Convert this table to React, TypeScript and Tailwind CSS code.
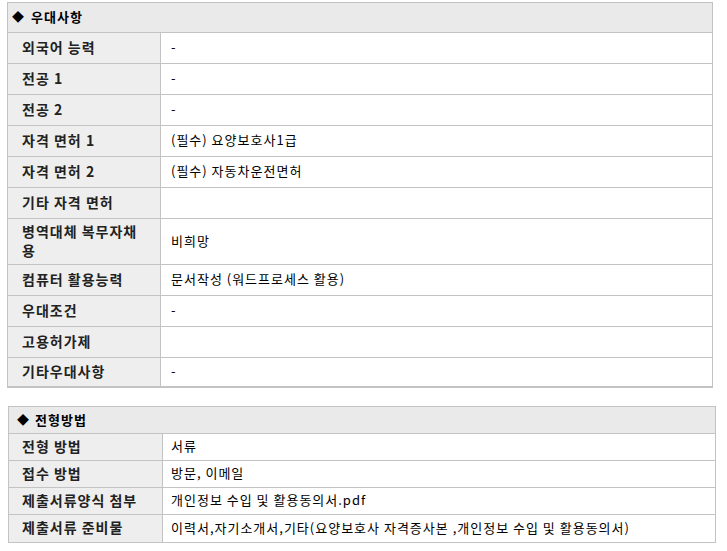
const font = { fontFamily: '"Noto Sans CJK KR", "Noto Sans", sans-serif' };

type Row = { label: React.ReactNode; value: string; h: string };

const prefRows: Row[] = [
  { label: "외국어 능력", value: "-", h: "h-[31px]" },
  { label: "전공 1", value: "-", h: "h-[31px]" },
  { label: "전공 2", value: "-", h: "h-[31px]" },
  { label: "자격 면허 1", value: "(필수) 요양보호사1급", h: "h-[31px]" },
  { label: "자격 면허 2", value: "(필수) 자동차운전면허", h: "h-[31px]" },
  { label: "기타 자격 면허", value: "", h: "h-[31px]" },
  {
    label: (
      <>
        병역대체 복무자채
        <br />용
      </>
    ),
    value: "비희망",
    h: "h-[46px]",
  },
  { label: "컴퓨터 활용능력", value: "문서작성 (워드프로세스 활용)", h: "h-[31px]" },
  { label: "우대조건", value: "-", h: "h-[31px]" },
  { label: "고용허가제", value: "", h: "h-[31px]" },
  { label: "기타우대사항", value: "-", h: "h-[29px]" },
];

const selectRows: Row[] = [
  { label: "전형 방법", value: "서류", h: "h-[27px]" },
  { label: "접수 방법", value: "방문, 이메일", h: "h-[27px]" },
  { label: "제출서류양식 첨부", value: "개인정보 수입 및 활용동의서.pdf", h: "h-[27px]" },
  {
    label: "제출서류 준비물",
    value: "이력서,자기소개서,기타(요양보호사 자격증사본 ,개인정보 수입 및 활용동의서)",
    h: "h-[28px]",
  },
];

export default function App() {
  return (
    <div className="min-h-[551px] w-[727px] bg-white pt-[2px] text-black" style={font}>
      {/* 우대사항 */}
      <div className="ml-[7px] w-[706px] border border-b-2 border-[#c3c3c3]">
        <div className="flex h-[29px] items-center bg-[#eaeaea] pb-[1px] pl-[4px] text-[13px] font-bold tracking-[1px]">
          <span className="mr-[6px] text-[12px]">◆</span>
          우대사항
        </div>
        {prefRows.map((r, i) => (
          <div key={i} className={`flex border-t border-[#c3c3c3] ${r.h}`}>
            <div className="flex w-[153px] shrink-0 items-center border-r border-[#c3c3c3] bg-[#eeeeee] pb-[2px] pl-[14px] text-[14px] font-bold leading-[19px] tracking-[1px] text-[#222]">
              <span>{r.label}</span>
            </div>
            <div className="flex flex-1 items-center pb-[2px] pl-[10px] text-[13px] tracking-[1px]">
              {r.value}
            </div>
          </div>
        ))}
      </div>

      {/* 전형방법 */}
      <div className="ml-[8px] mt-[18px] w-[708px] border border-[#c3c3c3]">
        <div className="flex h-[26px] items-center bg-[#eaeaea] pb-[1px] pl-[8px] text-[13px] font-bold tracking-[1px]">
          <span className="mr-[5px] text-[12px]">◆</span>
          전형방법
        </div>
        {selectRows.map((r, i) => (
          <div key={i} className={`flex border-t border-[#c3c3c3] ${r.h}`}>
            <div className="flex w-[154px] shrink-0 items-center border-r border-[#c3c3c3] bg-[#eeeeee] pb-[2px] pl-[13px] text-[14px] font-bold tracking-[1px] text-[#222]">
              {r.label}
            </div>
            <div className="flex flex-1 items-center pb-[2px] pl-[8px] text-[13px] tracking-[1px]">
              {r.value}
            </div>
          </div>
        ))}
      </div>
    </div>
  );
}
